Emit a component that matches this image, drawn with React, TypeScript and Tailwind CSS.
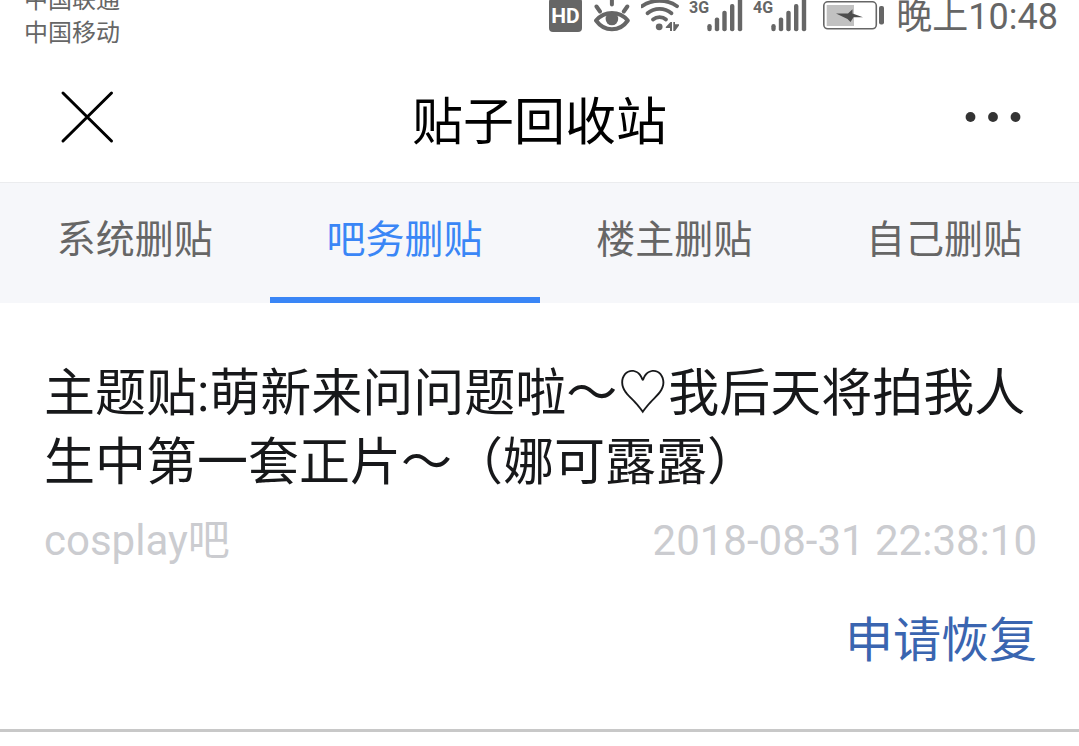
import { useState } from 'react';

const TABS = ['系统删贴', '吧务删贴', '楼主删贴', '自己删贴'];

const POSTS = [
  {
    id: 1,
    title: '主题贴:萌新来问问题啦～♡我后天将拍我人生中第一套正片～（娜可露露）',
    forum: 'cosplay吧',
    time: '2018-08-31 22:38:10',
  },
];

function HdIcon() {
  return (
    <svg width="33" height="32" viewBox="0 0 33 32" aria-hidden="true">
      <rect x="0" y="-2" width="33" height="34" rx="4" fill="#666" />
      <text x="16.5" y="23" textAnchor="middle" fontSize="21" fontWeight="700" fill="#fff">
        HD
      </text>
    </svg>
  );
}

function EyeIcon() {
  return (
    <svg width="37" height="32" viewBox="0 0 37 32" fill="none" stroke="#666" strokeWidth="4" strokeLinecap="round" aria-hidden="true">
      <path d="M3 20.500C7 16 12 13 18.900 13S31 16 34.800 20.500C31 26 26 29.300 18.900 29.300S7 26 3 20.500Z" strokeLinejoin="round" />
      <circle cx="18.900" cy="19" r="6.300" fill="#666" stroke="none" />
      <path d="M18.900 -2V4.500M3.500 6.500L7 11.500M34.300 6.500L30.800 11.500" />
    </svg>
  );
}

function WifiIcon() {
  return (
    <svg width="38" height="32" viewBox="0 0 38 32" fill="none" stroke="#666" strokeWidth="3.8" strokeLinecap="round" aria-hidden="true">
      <path d="M1 6.200C11 -1 26 -1 36 6.200" />
      <path d="M6.500 13.300C13.500 7.500 23.500 7.500 30.500 13.300" />
      <path d="M12 19.500C15.800 16.300 21.500 16.300 25 19.500" />
      <circle cx="18.200" cy="26.800" r="3.400" fill="#666" stroke="none" />
      <path d="M29.500 22H31V31H29V28H24.800V27ZM32.300 22H34V24.300H38V25.500L34 31H32.300Z" fill="#666" stroke="none" />
    </svg>
  );
}

function SignalIcon({ label, width }: { label: string; width: number }) {
  return (
    <svg width={width} height="32" viewBox={`0 0 ${width} 32`} className="overflow-visible" aria-label={label}>
      <text x="-1" y="13" fontSize="16" fontWeight="700" fill="#666">
        {label}
      </text>
      <g fill="#666">
        <rect x="17.300" y="24" width="4.400" height="7.200" rx="2.200" />
        <rect x="24.800" y="17.500" width="4.400" height="13.700" rx="2" />
        <rect x="32.300" y="10.700" width="4.400" height="20.500" rx="2" />
        <rect x="40" y="4" width="4.400" height="27.200" rx="2" />
        <rect x="47.800" y="-3" width="4.400" height="34.200" rx="2" />
      </g>
    </svg>
  );
}

function BatteryIcon() {
  return (
    <svg width="63" height="32" viewBox="0 0 63 32" aria-hidden="true">
      <rect x="1.800" y="1.800" width="52.500" height="27" rx="4" fill="none" stroke="#666" strokeWidth="1.600" />
      <rect x="4.700" y="5" width="27.300" height="21" fill="#c1c1c1" />
      <rect x="57" y="6" width="5" height="18.500" rx="2" fill="#666" />
      <path d="M14 13.500H26L30.500 9.300V13.500L41 17.300H31.500L28.500 22L25.500 19Z" fill="#4d4d4d" />
    </svg>
  );
}

export default function App() {
  const [active, setActive] = useState(1);

  return (
    <div className="min-h-screen overflow-hidden bg-white font-['Roboto','Noto_Sans_CJK_SC',sans-serif]">
      {/* Status bar */}
      <div className="flex h-[52px] justify-between overflow-hidden pr-[21px] pl-6 text-[#666]">
        <div className="flex flex-col justify-end pb-[2px] text-[24px] leading-[33px]">
          <span>中国联通</span>
          <span>中国移动</span>
        </div>
        <div className="flex items-start gap-[11px]">
          <HdIcon />
          <EyeIcon />
          <WifiIcon />
          <SignalIcon label="3G" width={53} />
          <SignalIcon label="4G" width={57} />
          <BatteryIcon />
          <span className="text-[36px] leading-[34px]">晚上10:48</span>
        </div>
      </div>

      {/* Nav bar */}
      <header className="flex h-[130px] items-center justify-between px-[57px]">
        <button type="button" aria-label="关闭">
          <svg width="60" height="60" viewBox="0 0 60 60" stroke="#000" strokeWidth="3" strokeLinecap="round">
            <path d="M6 6L54.500 54M54.500 6L6 54" />
          </svg>
        </button>
        <h1 className="pt-3 text-[51px] text-black">贴子回收站</h1>
        <button type="button" aria-label="更多">
          <svg width="60" height="60" viewBox="0 0 60 60" fill="#333">
            <circle cx="8.500" cy="30" r="4.900" />
            <circle cx="31" cy="30" r="4.900" />
            <circle cx="53.500" cy="30" r="4.900" />
          </svg>
        </button>
      </header>

      <nav className="grid grid-cols-4 border-t border-[#ebecee] bg-[#f6f7fa]">
        {TABS.map((tab, index) => (
          <button
            key={tab}
            type="button"
            onClick={() => setActive(index)}
            className={`h-[120px] border-b-[6px] text-[39px] ${
              index === active ? 'border-[#3a86f6] text-[#3a86f6]' : 'border-transparent text-[#666]'
            }`}
          >
            {tab}
          </button>
        ))}
      </nav>

      <main>
        {POSTS.map((post) => (
          <article key={post.id} className="border-b-[3px] border-[#c8c8c8] pt-14 pr-[42px] pb-[54px] pl-11">
            <h2 className="text-[51px] leading-[69px] text-[#17181a]">{post.title}</h2>
            <div className="mt-[14px] flex justify-between text-[42px] leading-[60px] text-[#cbccd0]">
              <span>{post.forum}</span>
              <time>{post.time}</time>
            </div>
            <div className="mt-9 flex justify-end">
              <button type="button" className="text-[48px] leading-[68px] text-[#3a65b0]">
                申请恢复
              </button>
            </div>
          </article>
        ))}
      </main>
    </div>
  );
}
